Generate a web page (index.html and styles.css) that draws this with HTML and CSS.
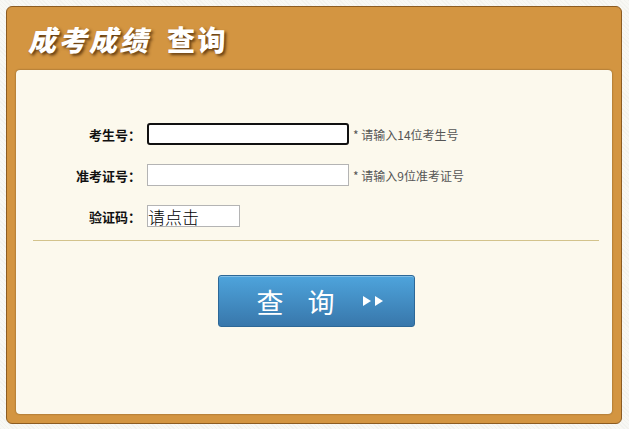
FILE: index.html
```html
<!DOCTYPE html>
<html lang="zh-CN">
<head>
  <meta charset="UTF-8">
  <title>成考成绩查询</title>
  <link rel="stylesheet" href="styles.css">
</head>
<body>
  <div class="box">
    <div class="boxHead">
      <h1><em>成考成绩</em>查询</h1>
    </div>

    <div class="boxBody">
      <form class="queryForm" onsubmit="return false;">
        <div class="row">
          <label class="rowLabel">考生号：</label>
          <input class="field focused" type="text">
          <span class="hint">* 请输入14位考生号</span>
        </div>
        <div class="row">
          <label class="rowLabel">准考证号：</label>
          <input class="field" type="text">
          <span class="hint">* 请输入9位准考证号</span>
        </div>
        <div class="row">
          <label class="rowLabel">验证码：</label>
          <input class="codeField" type="text" value="请点击">
        </div>

        <div class="divider"></div>

        <div class="actions">
          <button class="queryBtn" type="submit">
            <span class="btnText">查询</span>
            <svg class="arrows" width="22" height="12" viewBox="0 0 22 12">
              <polygon points="0,1 8,6 0,11" fill="#fff"/>
              <polygon points="12,1 20,6 12,11" fill="#fff"/>
            </svg>
          </button>
        </div>
      </form>
    </div>
  </div>
</body>
</html>
```

FILE: styles.css
```css
html, body {
  margin: 0;
  height: 100%;
}

body {
  padding: 6px 7px 5px 6px;
  box-sizing: border-box;
  background-color: #f8f8f4;
  background-image: repeating-linear-gradient(45deg, rgba(0,0,0,0.025) 0 1px, transparent 1px 3px);
  font-family: "Noto Sans CJK SC", "Noto Sans", sans-serif;
}

.box {
  height: 100%;
  box-sizing: border-box;
  background-color: #d39541;
  border: 1px solid #8c5c22;
  border-radius: 6px;
  padding: 0 9px 9px 9px;
  display: flex;
  flex-direction: column;
}

.boxHead {
  height: 63px;
  display: flex;
  align-items: center;
  padding-left: 12px;
}

.boxHead h1 {
  margin: 0;
  color: #fff;
  font-size: 28px;
  font-weight: 900;
  line-height: 1;
  letter-spacing: 2.5px;
  text-shadow: 2px 2px 3px rgba(60, 30, 0, 0.75);
}

.boxHead h1 em {
  font-style: italic;
  margin-right: 17px;
}

.boxBody {
  flex: 1;
  background-color: #fcf9ed;
  border-radius: 4px;
  box-shadow: 0 0 2px rgba(0, 0, 0, 0.45);
}

.queryForm {
  padding-top: 53px;
}

.row {
  display: flex;
  align-items: center;
  height: 22px;
  margin-bottom: 19px;
}

.rowLabel {
  width: 125px;
  text-align: right;
  font-size: 13px;
  font-weight: bold;
  color: #111;
  margin-right: 6px;
}

.field {
  width: 202px;
  height: 22px;
  box-sizing: border-box;
  border: 1px solid #b4b4b4;
  background: #fff;
  padding: 0 3px;
  margin: 0;
  outline: none;
}

.field.focused {
  border: 2px solid #111;
  border-radius: 3px;
}

.hint {
  margin-left: 4px;
  font-size: 12px;
  color: #555;
}

.codeField {
  width: 93px;
  height: 22px;
  box-sizing: border-box;
  border: 1px solid #b4b4b4;
  background: #fff;
  padding: 0;
  margin: 0;
  font-family: "Noto Sans CJK SC", sans-serif;
  font-size: 17px;
  font-weight: 300;
  color: #000;
  outline: none;
}

.divider {
  height: 1px;
  background-color: #d3c38c;
  margin: -6px 13px 0 17px;
}

.actions {
  display: flex;
  justify-content: center;
  padding: 34px 0 0 4px;
}

.queryBtn {
  width: 197px;
  height: 52px;
  border: 1px solid #2d6897;
  border-radius: 3px;
  background: linear-gradient(to bottom, #4ea4dc, #3877ab);
  box-shadow: inset 0 1px 0 rgba(255, 255, 255, 0.3);
  color: #fff;
  cursor: pointer;
  display: flex;
  align-items: center;
  justify-content: center;
  padding: 0 0 0 9px;
}

.btnText {
  font-family: "Noto Sans CJK SC", sans-serif;
  font-size: 27px;
  font-weight: normal;
  letter-spacing: 24px;
  line-height: 1;
}

.arrows {
  margin-left: 4px;
}
```
